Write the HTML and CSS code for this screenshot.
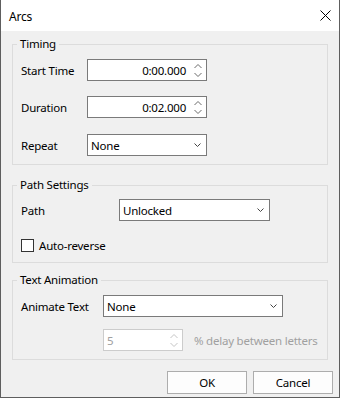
FILE: index.html
```html
<!DOCTYPE html>
<html>
<head>
<meta charset="utf-8">
<link rel="stylesheet" href="styles.css">
</head>
<body>
<div class="window">
  <div class="titlebar">
    <span class="title">Arcs</span>
    <svg class="close" width="11" height="11" viewBox="0 0 11 11"><path d="M0.5 0.5 L10.5 10.5 M10.5 0.5 L0.5 10.5" stroke="#000" stroke-width="1" fill="none"/></svg>
  </div>
  <div class="content">
    <div class="group timing">
      <span class="legend">Timing</span>
      <div class="row">
        <span class="label w66">Start Time</span>
        <div class="field spin w120">
          <span class="val">0:00.000</span>
          <svg class="arrows" width="8" height="13" viewBox="0 0 8 13"><path d="M0.5 4 L4 0.5 L7.5 4 M0.5 9 L4 12.5 L7.5 9" stroke="#6b6b6b" fill="none"/></svg>
        </div>
      </div>
      <div class="row mt15">
        <span class="label w66">Duration</span>
        <div class="field spin w120">
          <span class="val">0:02.000</span>
          <svg class="arrows" width="8" height="13" viewBox="0 0 8 13"><path d="M0.5 4 L4 0.5 L7.5 4 M0.5 9 L4 12.5 L7.5 9" stroke="#6b6b6b" fill="none"/></svg>
        </div>
      </div>
      <div class="row mt16">
        <span class="label w66">Repeat</span>
        <div class="field select w120">
          <span class="sval">None</span>
          <svg class="drop" width="7" height="4" viewBox="0 0 7 4"><path d="M0.5 0.5 L3.5 3.5 L6.5 0.5" stroke="#444" fill="none"/></svg>
        </div>
      </div>
    </div>

    <div class="group path">
      <span class="legend">Path Settings</span>
      <div class="row">
        <span class="label w98">Path</span>
        <div class="field select w151">
          <span class="sval">Unlocked</span>
          <svg class="drop" width="7" height="4" viewBox="0 0 7 4"><path d="M0.5 0.5 L3.5 3.5 L6.5 0.5" stroke="#444" fill="none"/></svg>
        </div>
      </div>
      <div class="check-row">
        <span class="checkbox"></span>
        <span class="check-label">Auto-reverse</span>
      </div>
    </div>

    <div class="group textanim">
      <span class="legend">Text Animation</span>
      <div class="row">
        <span class="label w82">Animate Text</span>
        <div class="field select w180">
          <span class="sval">None</span>
          <svg class="drop" width="7" height="4" viewBox="0 0 7 4"><path d="M0.5 0.5 L3.5 3.5 L6.5 0.5" stroke="#444" fill="none"/></svg>
        </div>
      </div>
      <div class="row mt12">
        <span class="label w82"></span>
        <div class="field spin disabled w80">
          <span class="dval">5</span>
          <svg class="arrows" width="8" height="13" viewBox="0 0 8 13"><path d="M0.5 4 L4 0.5 L7.5 4 M0.5 9 L4 12.5 L7.5 9" stroke="#c4c4c4" fill="none"/></svg>
        </div>
        <span class="hint">% delay between letters</span>
      </div>
    </div>

    <div class="buttons">
      <button class="btn">OK</button>
      <button class="btn">Cancel</button>
    </div>
  </div>
</div>
</body>
</html>
```

FILE: styles.css
```css
* { box-sizing: border-box; }
html, body { margin: 0; padding: 0; background: #ffffff; }
body {
  width: 341px;
  height: 400px;
  font-family: "Noto Sans", "Open Sans", sans-serif;
  font-size: 11.5px;
  letter-spacing: -0.22px;
  color: #000;
}
.window {
  width: 340px;
  height: 398px;
  border: 1px solid #5e5e5e;
  border-top: none;
  background: #f0f0f0;
  display: flex;
  flex-direction: column;
}
.titlebar {
  height: 31px;
  background: #fff;
  display: flex;
  align-items: center;
  justify-content: space-between;
  padding: 0 8px 0 8px;
  font-size: 12px;
}
.title { margin-top: 1px; }
.close { display: block; margin-top: 0; }
.content {
  padding: 13px 11px 0 11px;
  display: flex;
  flex-direction: column;
}
.group {
  position: relative;
  border: 1px solid #dcdcdc;
  padding: 14px 8px 8px 8px;
}
.legend {
  position: absolute;
  top: -9px;
  left: 4px;
  padding: 0 3px;
  line-height: 16px;
  background: #f0f0f0;
}
.group.path { margin-top: 20px; padding: 13px 8px 10px 8px; }
.group.textanim { margin-top: 17px; padding: 14px 8px 8px 8px; }
.row {
  display: flex;
  align-items: center;
  height: 22px;
}
.mt12 { margin-top: 12px; }
.mt15 { margin-top: 15px; }
.mt16 { margin-top: 16px; }
.label { flex: none; }
.w66 { width: 66px; }
.w98 { width: 98px; }
.w82 { width: 82px; }
.w120 { width: 120px; }
.w151 { width: 151px; }
.w180 { width: 180px; }
.w80 { width: 80px; }
.field {
  flex: none;
  height: 22px;
  border: 1px solid #7a7a7a;
  background: #fff;
  display: flex;
  align-items: center;
}
.spin .val {
  flex: 1;
  text-align: right;
  padding-right: 8px;
}
.spin .arrows { display: block; margin-right: 4px; flex: none; }
.select .sval { flex: 1; padding-left: 3px; }
.select .drop { display: block; margin-right: 5px; flex: none; }
.field.disabled { border-color: #cccccc; }
.dval { flex: 1; padding-left: 3px; color: #a0a0a0; }
.disabled .arrows { margin-right: 4px; }
.hint { margin-left: 11px; color: #a0a0a0; white-space: nowrap; }
.check-row {
  display: flex;
  align-items: center;
  height: 13px;
  margin-top: 18px;
}
.checkbox {
  width: 13px;
  height: 13px;
  border: 1px solid #333;
  background: #fff;
  flex: none;
}
.check-label { margin-left: 5px; }
.buttons {
  display: flex;
  justify-content: flex-end;
  gap: 6px;
  margin-top: 11px;
  margin-right: -5px;
}
.btn {
  width: 80px;
  height: 23px;
  border: 1px solid #adadad;
  background: #fdfdfd;
  font-family: inherit;
  font-size: 11.5px;
  letter-spacing: -0.22px;
  color: #000;
  padding: 0;
  margin: 0;
}
```
